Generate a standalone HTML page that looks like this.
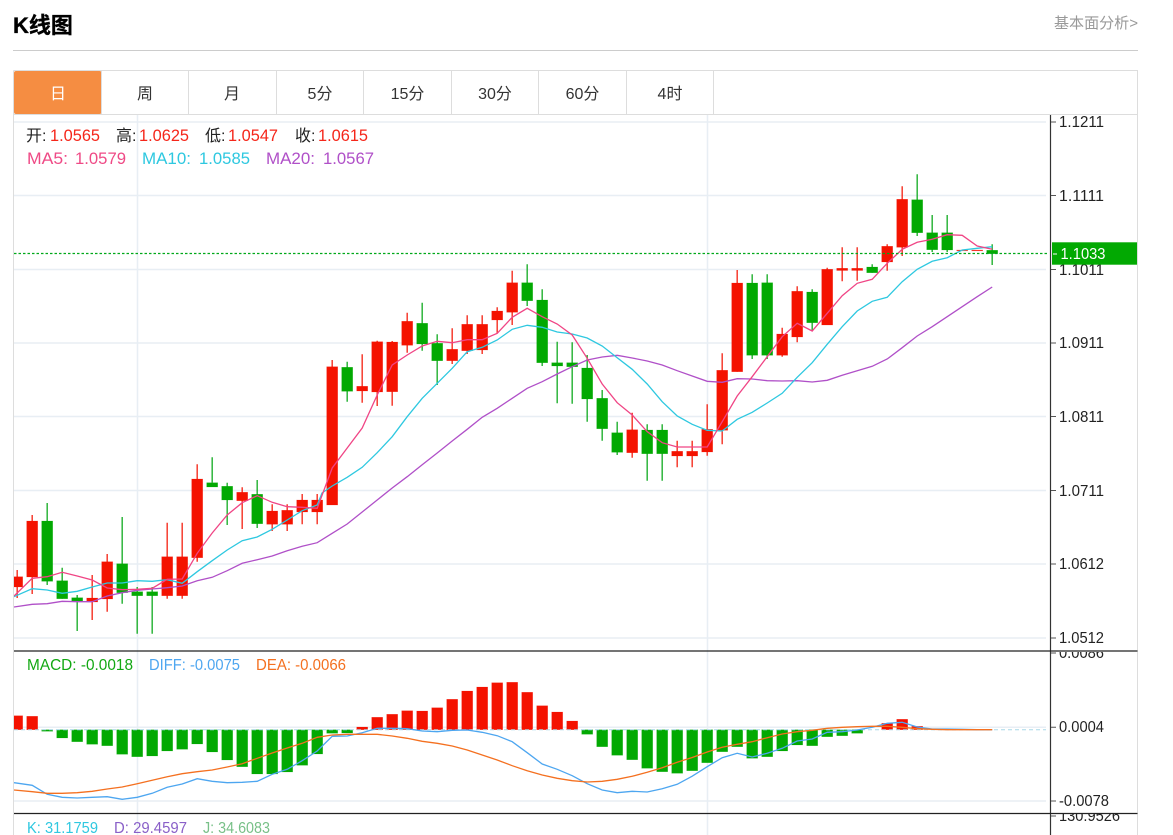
<!DOCTYPE html>
<html><head><meta charset="utf-8"><title>K线图</title>
<style>
html,body{margin:0;padding:0;background:#fff;width:1173px;height:835px;overflow:hidden}
svg{display:block;filter:blur(.3px)}
text{font-family:"Liberation Sans","Noto Sans CJK SC",sans-serif}
</style></head><body>
<svg width="1173" height="835" viewBox="0 0 1173 835" xmlns="http://www.w3.org/2000/svg">
<defs>
<clipPath id="ca"><rect x="14" y="115" width="1035" height="720"/></clipPath>
<clipPath id="c1"><rect x="1052" y="652" width="100" height="30"/></clipPath>
<clipPath id="c2"><rect x="1052" y="814" width="100" height="21"/></clipPath>
</defs>
<rect width="1173" height="835" fill="#fff"/>
<text x="13" y="33" font-size="22" font-weight="700" fill="#000" stroke="#000" stroke-width=".35">K线图</text>
<text x="1054" y="28" font-size="15" fill="#999" textLength="84" lengthAdjust="spacingAndGlyphs">基本面分析&gt;</text>
<path d="M13 50.5H1138" stroke="#ccc" fill="none"/>

<path d="M13.5 70.5H1137.5V835M13.5 70.5V835M14 114.5H1137.5" stroke="#ddd" fill="none"/>
<rect x="14" y="71" width="87.5" height="43" rx="2" fill="#f58d42"/>
<path d="M101.5 71V114M188.5 71V114M276.5 71V114M363.5 71V114M451.5 71V114M538.5 71V114M626.5 71V114M713.5 71V114" stroke="#ddd" fill="none"/>
<g font-size="16" fill="#333" text-anchor="middle">
<text x="58" y="99" fill="#fff">日</text>
<text x="145" y="99">周</text>
<text x="232" y="99">月</text>
<text x="320" y="99">5分</text>
<text x="407.5" y="99">15分</text>
<text x="495" y="99">30分</text>
<text x="582.5" y="99">60分</text>
<text x="670" y="99">4时</text>
</g>

<!-- grid -->
<path d="M137.5 115V835M707.5 115V835" stroke="#e8eef4" stroke-width="1.5" fill="none"/>
<path d="M14 122H1046M14 195.5H1046M14 269.5H1046M14 343H1046M14 416.5H1046M14 490.5H1046M14 564H1046M14 638H1046M14 727.3H1046M14 801H1046" stroke="#e8eef4" stroke-width="1.5" fill="none"/>

<g clip-path="url(#ca)">
<!-- red wicks -->
<path fill="none" stroke="#f41a0a" stroke-opacity=".85" stroke-width="1.5" d="M17.2 570V598M32.2 515V594M92.2 575V620M107.2 554V611.7M167.2 522.7V598.7M182.2 522.7V598.7M197.2 464.3V561.7M242.2 487.3V529M272.2 504.3V531M287.2 504.3V531M302.2 494V524.3M317.2 494V524.3M332.2 360V505M362.2 354.3V402.7M377.2 340.7V406M392.2 341V405.7M407.2 312.7V352.7M452.2 328.3V364M467.2 315.3V354M482.2 315.3V354M497.2 307.3V333.3M512.2 270.7V325M632.2 412.7V457.7M677.2 440.7V467.3M692.2 440.7V467.3M707.2 404.3V455.7M722.2 353.3V444.3M737.2 270V371.7M782.2 327.7V356.7M797.2 286.3V342.3M827.2 267.7V325M842.2 247.3V281.3M857.2 247.3V280.7M887.2 244.3V270.7M902.2 186.3V256"/>
<!-- green wicks -->
<path fill="none" stroke="#0aa81a" stroke-opacity=".85" stroke-width="1.5" d="M47.2 503V585M62.2 567.7V598.7M77.2 595V631M122.2 517V603.7M137.2 587V633.7M152.2 587V633.7M212.2 457.3V482.7M227.2 482.7V525M257.2 480V528M347.2 361.7V401.7M422.2 302.7V350.7M437.2 334.3V385M527.2 264.3V306M542.2 289.3V366M557.2 341.7V403.3M572.2 342.3V403.7M587.2 355V421.7M602.2 390V440.7M617.2 421.7V455M647.2 424.3V480.7M662.2 424.3V480.7M752.2 274.3V359M767.2 274.3V359M812.2 289.3V330M872.2 264.3V272.7M917.2 174.3V236M932.2 215V252M947.2 215V252M992.2 244.3V265"/>
<!-- red bodies -->
<path fill="#f41200" stroke="#f41200" stroke-opacity=".35" stroke-width=".6" d="M14 576.7H22.7V587H14zM26.7 521h11V577h-11zM86.7 598h11V602h-11zM101.7 561.7h11V599h-11zM161.7 556.7h11V595.7h-11zM176.7 556.7h11V595.7h-11zM191.7 479h11V557.7h-11zM236.7 492.3h11V500.7h-11zM266.7 511h11V524.3h-11zM281.7 510.3h11V524.3h-11zM296.7 500h11V512h-11zM311.7 500h11V512h-11zM326.7 366.7h11V505h-11zM356.7 386.3h11V391h-11zM371.7 341.7h11V392h-11zM386.7 342h11V391.7h-11zM401.7 321.3h11V345.3h-11zM446.7 349.3h11V360.7h-11zM461.7 324.3h11V350.7h-11zM476.7 324.3h11V350h-11zM491.7 311h11V320h-11zM506.7 282.7h11V312.3h-11zM626.7 429.7h11V452.7h-11zM671.7 451.3h11V456h-11zM686.7 451.3h11V456h-11zM701.7 429.3h11V452h-11zM716.7 370.3h11V430.3h-11zM731.7 283h11V371.7h-11zM776.7 334h11V355.3h-11zM791.7 291.3h11V337h-11zM821.7 269.3h11V325h-11zM836.7 268.3h11V270.5h-11zM851.7 268.3h11V270.5h-11zM881.7 246.3h11V262h-11zM896.7 199.3h11V247.3h-11zM956.7 250h11V250.8h-11zM971.7 250h11V250.8h-11z"/>
<!-- green bodies -->
<path fill="#02a902" stroke="#02a902" stroke-opacity=".35" stroke-width=".6" d="M41.7 521h11V581.3h-11zM56.7 580.7h11V598.7h-11zM71.7 597.7h11V601h-11zM116.7 563.7h11V592.7h-11zM131.7 591.7h11V595.7h-11zM146.7 591.7h11V595.7h-11zM206.7 482.7h11V487h-11zM221.7 486.3h11V500h-11zM251.7 494.3h11V523.7h-11zM341.7 367.3h11V391.3h-11zM416.7 323.3h11V344h-11zM431.7 343.3h11V360.7h-11zM521.7 282.7h11V300.7h-11zM536.7 300h11V362.7h-11zM551.7 362.7h11V366h-11zM566.7 362.7h11V366.7h-11zM581.7 368h11V399h-11zM596.7 398.3h11V428.7h-11zM611.7 432.7h11V452.3h-11zM641.7 430h11V453.7h-11zM656.7 430h11V453.7h-11zM746.7 283h11V355.3h-11zM761.7 282.7h11V355.3h-11zM806.7 292h11V322.7h-11zM866.7 267h11V272.7h-11zM911.7 199.7h11V232.7h-11zM926.7 232.7h11V249.7h-11zM941.7 232.7h11V250h-11zM986.7 250.3h11V253.7h-11z"/>

<!-- MA lines -->
<polyline fill="none" stroke="#b050c8" stroke-width="1.3" points="14,607 32.2,604.3 47.2,603.7 62.2,601.3 77.2,601.7 92.2,601.7 107.2,596 122.2,592.7 137.2,590.3 152.2,589 167.2,587.7 182.2,586 197.2,580.7 212.2,577.3 227.2,570.7 242.2,563.3 257.2,559.7 272.2,556 287.2,550.7 302.2,546.3 317.2,542.7 332.2,533.3 347.2,524 362.2,512 377.2,500 392.2,488 407.2,476.7 422.2,464.7 437.2,453 452.2,441 467.2,429.3 482.2,417.3 497.2,408.3 512.2,398.3 527.2,388.3 542.2,381.7 557.2,374 572.2,366.7 587.2,360 602.2,357 617.2,355.3 632.2,358 647.2,361 662.2,365 677.2,370.7 692.2,376 707.2,381.3 722.2,382.3 737.2,378.7 752.2,379 767.2,380.7 782.2,381 797.2,380.7 812.2,382 827.2,380.3 842.2,375.3 857.2,370.7 872.2,366.3 887.2,359 902.2,347.7 917.2,336 932.2,326.7 947.2,316.7 962.2,306.7 977.2,296.7 992.2,287"/>
<polyline fill="none" stroke="#2ec8e0" stroke-width="1.3" points="14,596.7 32.2,588.7 47.2,590 62.2,593.3 77.2,591.3 92.2,587 107.2,583 122.2,583 137.2,580.7 152.2,581.3 167.2,579.7 182.2,583.3 197.2,571.7 212.2,560.7 227.2,550 242.2,540.7 257.2,537 272.2,529.3 287.2,520 302.2,510.7 317.2,505 322,493 332.2,486 347.2,477.3 362.2,467.3 377.2,452.7 392.2,436.7 407.2,416.7 422.2,398.3 437.2,383.3 452.2,368.3 467.2,351.7 482.2,347.3 497.2,340 512.2,329.3 527.2,325.3 542.2,327.3 557.2,332 572.2,334 587.2,338 602.2,346 617.2,357.7 632.2,369.3 647.2,384 662.2,401.7 677.2,416 692.2,424.3 707.2,430.3 722.2,431 737.2,419.3 752.2,412.3 767.2,403 782.2,393.3 797.2,377.3 812.2,362.7 827.2,344.3 842.2,326.7 857.2,311 872.2,301.3 887.2,297.3 902.2,281.7 917.2,269.3 932.2,261.3 947.2,257.7 962.2,250 977.2,248.3 992.2,246.7"/>
<polyline fill="none" stroke="#f04585" stroke-width="1.3" points="14,596 32.2,578.3 47.2,576.7 62.2,572.3 77.2,576 92.2,580 107.2,588 122.2,589.7 137.2,589.3 152.2,588.3 167.2,579.3 182.2,579 197.2,553.3 212.2,533 227.2,515 242.2,502.7 257.2,495.7 272.2,502.3 287.2,506.7 302.2,507.3 317.2,508.3 332.2,468 347.2,448 362.2,428 377.2,395 392.2,365 407.2,355 422.2,346 437.2,341.3 452.2,342.7 467.2,339.7 482.2,339.7 497.2,333.3 512.2,317.3 527.2,308.3 542.2,316.7 557.2,324 572.2,335 587.2,358.3 602.2,384 617.2,402.7 632.2,415 647.2,431.7 662.2,442.7 677.2,447 692.2,447 707.2,447 722.2,421.7 737.2,396 752.2,376.7 767.2,356.7 782.2,336.7 797.2,323.3 812.2,331 827.2,313.3 842.2,295.7 857.2,283.3 872.2,279.3 887.2,263.3 902.2,249.3 917.2,242.3 932.2,239.3 947.2,234.7 962.2,235.3 977.2,246 992.2,249.3"/>

<!-- last price dotted -->
<path d="M14 253.5H1048" stroke="#00a81a" stroke-width="1.3" stroke-dasharray="2.5 2" fill="none"/>

<!-- MACD bars -->
<path fill="#f41200" stroke="#f41200" stroke-opacity=".3" stroke-width=".6" d="M14 715.7H22.7V729.7H14zM26.7 716.3h11V729.7h-11zM356.7 727h11V729.7h-11zM371.7 717.3h11V729.7h-11zM386.7 714.3h11V729.7h-11zM401.7 710.7h11V729.7h-11zM416.7 711h11V729.7h-11zM431.7 707.7h11V729.7h-11zM446.7 699.3h11V729.7h-11zM461.7 691h11V729.7h-11zM476.7 687h11V729.7h-11zM491.7 682.7h11V729.7h-11zM506.7 682.3h11V729.7h-11zM521.7 692.3h11V729.7h-11zM536.7 705.7h11V729.7h-11zM551.7 712h11V729.7h-11zM566.7 721h11V729.7h-11zM881.7 723.3h11V729.7h-11zM896.7 719.3h11V729.7h-11zM911.7 726.3h11V729.7h-11z"/>
<path fill="#02a902" stroke="#02a902" stroke-opacity=".3" stroke-width=".6" d="M41.7 729.7h11V731.3h-11zM56.7 729.7h11V738h-11zM71.7 729.7h11V741.7h-11zM86.7 729.7h11V744.3h-11zM101.7 729.7h11V745.7h-11zM116.7 729.7h11V754.3h-11zM131.7 729.7h11V756.7h-11zM146.7 729.7h11V756h-11zM161.7 729.7h11V751h-11zM176.7 729.7h11V749.3h-11zM191.7 729.7h11V744h-11zM206.7 729.7h11V752h-11zM221.7 729.7h11V760h-11zM236.7 729.7h11V766.7h-11zM251.7 729.7h11V774h-11zM266.7 729.7h11V774h-11zM281.7 729.7h11V772h-11zM296.7 729.7h11V765.3h-11zM311.7 729.7h11V754h-11zM326.7 729.7h11V733.3h-11zM341.7 729.7h11V733h-11zM581.7 729.7h11V734.3h-11zM596.7 729.7h11V746.7h-11zM611.7 729.7h11V755.3h-11zM626.7 729.7h11V759.7h-11zM641.7 729.7h11V768.3h-11zM656.7 729.7h11V771.7h-11zM671.7 729.7h11V773.3h-11zM686.7 729.7h11V770.7h-11zM701.7 729.7h11V762.7h-11zM716.7 729.7h11V751.7h-11zM731.7 729.7h11V746.7h-11zM746.7 729.7h11V758.3h-11zM761.7 729.7h11V756.7h-11zM776.7 729.7h11V751h-11zM791.7 729.7h11V745h-11zM806.7 729.7h11V745.7h-11zM821.7 729.7h11V736.7h-11zM836.7 729.7h11V735.7h-11zM851.7 729.7h11V733.3h-11z"/>
<path d="M14 729.7H1046" stroke="#a8d8e8" stroke-width="1" stroke-dasharray="4 3" fill="none"/>

<polyline fill="none" stroke="#4da6f0" stroke-width="1.3" points="14,782.7 32.2,785.3 47.2,794.3 62.2,797.3 77.2,798 92.2,797.3 107.2,796.7 122.2,799.3 137.2,797.3 152.2,793.3 167.2,787.3 182.2,784 197.2,778.7 212.2,781.3 227.2,782.7 242.2,782.3 257.2,781.3 272.2,774.3 287.2,769.3 302.2,760.7 317.2,751 332.2,736.3 347.2,736 362.2,732.7 377.2,728.3 392.2,728.3 407.2,728.7 422.2,731 437.2,731.7 452.2,730.3 467.2,730 482.2,732.3 497.2,735.7 512.2,741.7 527.2,752.7 542.2,764 557.2,769.3 572.2,775.7 587.2,783.7 602.2,790 617.2,792.7 632.2,791.3 647.2,792 662.2,788.7 677.2,784.3 692.2,776.2 707.2,766.7 722.2,757.7 737.2,753.3 752.2,757 767.2,753.3 782.2,748.3 797.2,741 812.2,739 827.2,732.3 842.2,731.7 857.2,730 872.2,727.3 887.2,723.3 902.2,722.3 917.2,727 932.2,729 947.2,729 962.2,729.3 977.2,729.7 992.2,729.7"/>
<polyline fill="none" stroke="#f47020" stroke-width="1.3" points="14,790 32.2,791.7 47.2,793.3 62.2,793.3 77.2,792.7 92.2,791.3 107.2,789 122.2,787 137.2,783.7 152.2,780.3 167.2,776.7 182.2,773.7 197.2,771.7 212.2,770 227.2,767 242.2,763.7 257.2,758.3 272.2,753 287.2,748 302.2,743.3 317.2,737.3 332.2,735 347.2,734.3 362.2,734.3 377.2,734.3 392.2,736 407.2,738.3 422.2,741.3 437.2,743.3 452.2,746 467.2,750 482.2,755 497.2,760 512.2,765.7 527.2,770.7 542.2,775 557.2,778.3 572.2,780.7 587.2,782 602.2,781.3 617.2,779.3 632.2,776.3 647.2,772.3 662.2,767.7 677.2,762.3 692.2,757.5 707.2,752 722.2,747.3 737.2,744.3 752.2,741.7 767.2,737.7 782.2,734 797.2,731.7 812.2,730.3 827.2,728.3 842.2,727.3 857.2,726.7 872.2,726.3 887.2,726.3 902.2,727.3 917.2,728.7 932.2,729.3 947.2,729.7 962.2,729.7 977.2,729.7 992.2,729.7"/>
</g>

<!-- legend -->
<g font-size="16.5" lengthAdjust="spacingAndGlyphs">
<text x="26" y="141" font-size="16" fill="#222">开:</text><text x="50" y="141" fill="#f5261a" textLength="50" lengthAdjust="spacingAndGlyphs">1.0565</text>
<text x="116" y="141" font-size="16" fill="#222">高:</text><text x="139" y="141" fill="#f5261a" textLength="50" lengthAdjust="spacingAndGlyphs">1.0625</text>
<text x="205" y="141" font-size="16" fill="#222">低:</text><text x="228" y="141" fill="#f5261a" textLength="50" lengthAdjust="spacingAndGlyphs">1.0547</text>
<text x="295" y="141" font-size="16" fill="#222">收:</text><text x="318" y="141" fill="#f5261a" textLength="50" lengthAdjust="spacingAndGlyphs">1.0615</text>
<text x="27" y="164" fill="#ef4a86" textLength="41" lengthAdjust="spacingAndGlyphs">MA5:</text><text x="75" y="164" fill="#ef4a86" textLength="51" lengthAdjust="spacingAndGlyphs">1.0579</text>
<text x="142" y="164" fill="#2ec8e0" textLength="49" lengthAdjust="spacingAndGlyphs">MA10:</text><text x="199" y="164" fill="#2ec8e0" textLength="51" lengthAdjust="spacingAndGlyphs">1.0585</text>
<text x="266" y="164" fill="#b050c8" textLength="49" lengthAdjust="spacingAndGlyphs">MA20:</text><text x="323" y="164" fill="#b050c8" textLength="51" lengthAdjust="spacingAndGlyphs">1.0567</text>
</g>
<g font-size="16">
<text x="27" y="670" fill="#12a812" textLength="106" lengthAdjust="spacingAndGlyphs">MACD: -0.0018</text>
<text x="149" y="670" fill="#4da6f0" textLength="91" lengthAdjust="spacingAndGlyphs">DIFF: -0.0075</text>
<text x="256" y="670" fill="#f47020" textLength="90" lengthAdjust="spacingAndGlyphs">DEA: -0.0066</text>
<text x="27" y="833" fill="#30c8e0" textLength="71" lengthAdjust="spacingAndGlyphs">K: 31.1759</text>
<text x="114" y="833" fill="#8a60c8" textLength="73" lengthAdjust="spacingAndGlyphs">D: 29.4597</text>
<text x="203" y="833" fill="#78c088" textLength="67" lengthAdjust="spacingAndGlyphs">J: 34.6083</text>
</g>

<!-- axis -->
<path d="M1050.5 115V835" stroke="#333" stroke-width="1.2" fill="none"/>
<path d="M1051 122H1056M1051 195.5H1056M1051 269.5H1056M1051 343H1056M1051 416.5H1056M1051 490.5H1056M1051 564H1056M1051 638H1056M1051 653H1056M1051 727.3H1056M1051 801H1056M1051 816H1056" stroke="#555" fill="none"/>
<g font-size="15.5" fill="#222">
<text x="1059" y="127" textLength="45" lengthAdjust="spacingAndGlyphs">1.1211</text>
<text x="1059" y="201" textLength="45" lengthAdjust="spacingAndGlyphs">1.1111</text>
<text x="1059" y="275" textLength="45" lengthAdjust="spacingAndGlyphs">1.1011</text>
<text x="1059" y="348" textLength="45" lengthAdjust="spacingAndGlyphs">1.0911</text>
<text x="1059" y="422" textLength="45" lengthAdjust="spacingAndGlyphs">1.0811</text>
<text x="1059" y="496" textLength="45" lengthAdjust="spacingAndGlyphs">1.0711</text>
<text x="1059" y="569" textLength="45" lengthAdjust="spacingAndGlyphs">1.0612</text>
<text x="1059" y="643" textLength="45" lengthAdjust="spacingAndGlyphs">1.0512</text>
<text x="1059" y="658" textLength="45" lengthAdjust="spacingAndGlyphs" clip-path="url(#c1)">0.0086</text>
<text x="1059" y="732" textLength="45" lengthAdjust="spacingAndGlyphs">0.0004</text>
<text x="1059" y="806" textLength="50" lengthAdjust="spacingAndGlyphs">-0.0078</text>
<text x="1059" y="821" textLength="61" lengthAdjust="spacingAndGlyphs" clip-path="url(#c2)">130.9526</text>
</g>
<rect x="1052" y="242.3" width="85" height="22.4" fill="#02a902"/>
<path d="M1053 254H1057" stroke="#fff" fill="none"/>
<text x="1060.5" y="259" font-size="15.5" fill="#fff" textLength="45" lengthAdjust="spacingAndGlyphs">1.1033</text>

<path d="M14 651H1137.5M14 813.5H1137.5" stroke="#222" stroke-width="1.2" fill="none"/>
</svg>
</body></html>
